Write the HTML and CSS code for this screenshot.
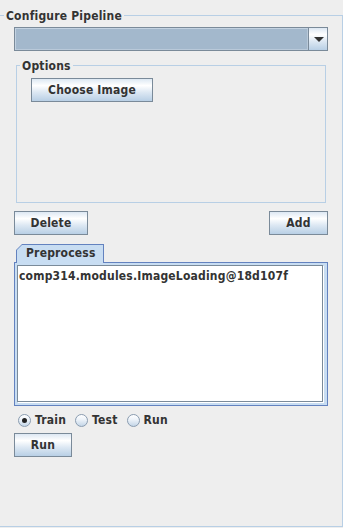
FILE: index.html
```html
<!DOCTYPE html>
<html>

<head>
  <meta charset="utf-8">
  <meta name="viewport" content="width=device-width">
  <title>Configure Pipeline</title>
  <link rel="stylesheet" href="styles.css">
</head>

<body>
  <div class="frame">
    <div class="legend">Configure Pipeline</div>

    <div class="combo">
      <div class="combo-field"></div>
      <div class="combo-btn">
        <svg width="10" height="5" viewBox="0 0 10 5"><polygon points="0,0 10,0 5,5" fill="#333"/></svg>
      </div>
    </div>

    <div class="options">
      <div class="legend legend-small">Options</div>
      <button class="btn btn-choose">Choose Image</button>
    </div>

    <div class="btn-row">
      <button class="btn btn-delete">Delete</button>
      <button class="btn btn-add">Add</button>
    </div>

    <div class="tabs">
      <div class="tab"><div class="tab-inner">Preprocess</div></div>
      <div class="tab-content">
        <div class="scroll">
          <div class="textarea">comp314.modules.ImageLoading@18d107f</div>
        </div>
      </div>
    </div>

    <div class="radios">
      <label class="radio-item"><span class="radio on"></span>Train</label>
      <label class="radio-item"><span class="radio"></span>Test</label>
      <label class="radio-item"><span class="radio"></span>Run</label>
    </div>

    <button class="btn btn-run">Run</button>
  </div>
</body>
</html>
```

FILE: styles.css
```css
html {
  background-color: #eeeeee;
}

body {
  margin: 0;
  padding: 0;
  font-family: "DejaVu Sans Condensed", "DejaVu Sans", sans-serif;
  font-stretch: condensed;
  font-size: 12px;
  font-weight: bold;
  letter-spacing: 0.2px;
  color: #333333;
}

.frame {
  box-sizing: border-box;
  width: 343px;
  height: 512px;
  margin-top: 15px;
  border: 1px solid #b8cfe5;
  border-left: none;
}

.legend {
  width: fit-content;
  background-color: #eeeeee;
  line-height: 13px;
  padding: 0 2px;
  margin: -6px 0 0 4px;
}

.legend-small {
  margin-left: 3px;
}

/* combo box */
.combo {
  box-sizing: border-box;
  display: flex;
  width: 314px;
  height: 24px;
  margin: 4px 0 0 14px;
  border: 1px solid #7a8a99;
}

.combo-field {
  flex: 1;
  background-color: #a3b8cc;
  box-shadow: inset 1px 1px 0 #c3d2e1, inset -1px -1px 0 #b9c9d9;
}

.combo-btn {
  width: 18px;
  border-left: 1px solid #7a8a99;
  display: flex;
  align-items: center;
  justify-content: center;
  background: linear-gradient(to bottom, #dde8f3 0%, #ffffff 30%, #dde8f3 60%, #b8cfe5 100%);
}

.combo-btn svg {
  display: block;
  margin-left: 1px;
}

/* options group */
.options {
  box-sizing: border-box;
  width: 310px;
  height: 138px;
  margin: 14px 0 0 16px;
  border: 1px solid #b8cfe5;
}

.btn {
  box-sizing: border-box;
  display: block;
  height: 24px;
  padding: 0;
  border: 1px solid #7a8a99;
  background: linear-gradient(to bottom, #dde8f3 0%, #ffffff 30%, #dde8f3 60%, #b8cfe5 100%);
  font: inherit;
  letter-spacing: inherit;
  color: #333333;
  line-height: 22px;
  text-align: center;
}

.btn-choose {
  width: 122px;
  margin: 5px 0 0 14px;
}

.btn-row {
  display: flex;
  justify-content: space-between;
  width: 314px;
  margin: 8px 0 0 14px;
}

.btn-delete {
  width: 74px;
}

.btn-add {
  width: 59px;
}

/* tabbed pane */
.tabs {
  width: 314px;
  margin: 9px 0 0 14px;
}

.tab {
  box-sizing: border-box;
  position: relative;
  z-index: 1;
  width: 88px;
  height: 19px;
  margin: 0 0 -1px 2px;
  padding: 1px 1px 0 1px;
  background-color: #6382bf;
  clip-path: polygon(0 6px, 6px 0, 100% 0, 100% 100%, 0 100%);
}

.tab-inner {
  box-sizing: border-box;
  height: 100%;
  padding: 2px 0 0 9px;
  line-height: 13px;
  background-color: #c8ddf2;
  clip-path: polygon(0 5px, 5px 0, 100% 0, 100% 100%, 0 100%);
}

.tab-content {
  box-sizing: border-box;
  height: 144px;
  padding: 2px 4px 3px 2px;
  border: 1px solid #6382bf;
  background-color: #c8ddf2;
}

.scroll {
  box-sizing: border-box;
  height: 137px;
  border: 1px solid #7a8a99;
  box-shadow: 1px 1px 0 #ffffff;
  background-color: #ffffff;
}

.textarea {
  padding: 4px 1px 0 1px;
  line-height: 13px;
}

/* radio buttons */
.radios {
  display: flex;
  align-items: center;
  gap: 9px;
  height: 17px;
  margin: 6px 0 0 18px;
}

.radio-item {
  display: flex;
  align-items: center;
  gap: 4px;
  line-height: 13px;
}

.radio {
  box-sizing: border-box;
  width: 13px;
  height: 13px;
  border: 1px solid #8a9cb0;
  border-radius: 50%;
  background: linear-gradient(to bottom, #ffffff 0%, #eef3f9 40%, #c4d6e8 100%);
  display: flex;
  align-items: center;
  justify-content: center;
}

.radio.on::after {
  content: "";
  width: 5px;
  height: 5px;
  border-radius: 50%;
  background-color: #222222;
}

.btn-run {
  width: 58px;
  margin: 4px 0 0 14px;
}
```
